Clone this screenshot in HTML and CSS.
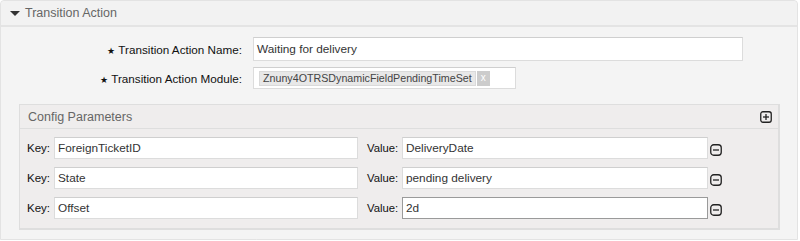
FILE: index.html
```html
<!DOCTYPE html>
<html>
<head>
<meta charset="utf-8">
<link rel="stylesheet" href="styles.css">
</head>
<body>
<div class="widget">
  <div class="widget-head"><span class="tri"></span><span class="head-title">Transition Action</span></div>
  <div class="widget-body">
    <div class="field-row">
      <label class="field-label"><span class="marker">★</span> Transition Action Name:</label>
      <div class="input name-input">Waiting for delivery</div>
    </div>
    <div class="field-row module-row">
      <label class="field-label"><span class="marker">★</span> Transition Action Module:</label>
      <div class="input module-input"><span class="token">Znuny4OTRSDynamicFieldPendingTimeSet</span><span class="token-x">x</span></div>
    </div>
    <div class="inner">
      <div class="inner-head">
        <span class="inner-title">Config Parameters</span>
        <svg class="icon plus" width="12" height="12" viewBox="0 0 12 12"><rect x="0.75" y="0.75" width="10.5" height="10.5" rx="2.2" fill="none" stroke="#222" stroke-width="1.3"/><line x1="3" y1="6" x2="9" y2="6" stroke="#222" stroke-width="1.3"/><line x1="6" y1="3" x2="6" y2="9" stroke="#222" stroke-width="1.3"/></svg>
      </div>
      <div class="inner-body">
        <div class="kv-row">
          <span class="key-label">Key:</span>
          <div class="input key-input">ForeignTicketID</div>
          <span class="value-label">Value:</span>
          <div class="input value-input">DeliveryDate</div>
          <svg class="icon minus" width="12" height="12" viewBox="0 0 12 12"><rect x="0.75" y="0.75" width="10.5" height="10.5" rx="3" fill="none" stroke="#222" stroke-width="1.3"/><line x1="3" y1="6" x2="9" y2="6" stroke="#222" stroke-width="1.3"/></svg>
        </div>
        <div class="kv-row">
          <span class="key-label">Key:</span>
          <div class="input key-input">State</div>
          <span class="value-label">Value:</span>
          <div class="input value-input">pending delivery</div>
          <svg class="icon minus" width="12" height="12" viewBox="0 0 12 12"><rect x="0.75" y="0.75" width="10.5" height="10.5" rx="3" fill="none" stroke="#222" stroke-width="1.3"/><line x1="3" y1="6" x2="9" y2="6" stroke="#222" stroke-width="1.3"/></svg>
        </div>
        <div class="kv-row">
          <span class="key-label">Key:</span>
          <div class="input key-input">Offset</div>
          <span class="value-label">Value:</span>
          <div class="input value-input focused">2d</div>
          <svg class="icon minus" width="12" height="12" viewBox="0 0 12 12"><rect x="0.75" y="0.75" width="10.5" height="10.5" rx="3" fill="none" stroke="#222" stroke-width="1.3"/><line x1="3" y1="6" x2="9" y2="6" stroke="#222" stroke-width="1.3"/></svg>
        </div>
      </div>
    </div>
  </div>
</div>
</body>
</html>
```

FILE: styles.css
```css
* { box-sizing: border-box; }
html, body { margin: 0; padding: 0; background: #ffffff; }
body { font-family: "Liberation Sans", Arial, sans-serif; color: #222; }

.widget {
  width: 798px;
  border: 1px solid #e3e3e3;
  border-radius: 4px 4px 0 0;
  background: #f4f4f4;
}
.widget-head {
  height: 26px;
  background: #f2f2f2;
  border-bottom: 2px solid #e4e4e4;
  display: flex;
  align-items: center;
  padding-left: 9px;
  border-radius: 4px 4px 0 0;
}
.tri {
  width: 0; height: 0;
  border-left: 5px solid transparent;
  border-right: 5px solid transparent;
  border-top: 5px solid #333;
  margin-right: 5px;
  margin-top: 1px;
}
.head-title { font-size: 12.5px; color: #666; }

.widget-body { padding: 10px 17px 9px 18px; }

.field-row { display: flex; align-items: center; height: 24px; }
.module-row { margin-top: 5px; }
.field-label {
  width: 241px;
  margin-right: 11px;
  text-align: right;
  font-size: 11.7px;
  color: #111;
  margin-left: -18px;
}
.marker { font-size: 9px; vertical-align: 0; }

.input {
  background: #fff;
  border: 1px solid #dcdcdc;
  border-top-color: #cfcfcf;
  font-size: 11.8px;
  color: #333;
  display: flex;
  align-items: center;
  padding-left: 3px;
}
.name-input { width: 490px; height: 24px; }
.module-input { width: 263px; height: 22px; padding-left: 5px; }
.token {
  background: #e8e8e8;
  border: 1px solid #dadada;
  font-size: 10.7px;
  color: #444;
  padding: 0 3px;
  height: 15px;
  line-height: 13px;
}
.token-x {
  background: #cccccc;
  color: #fff;
  font-size: 10px;
  width: 13px;
  height: 15px;
  line-height: 14px;
  text-align: center;
  margin-left: 1px;
}

.inner {
  margin-top: 14px;
  border: 1px solid #dedede;
  border-right-width: 2px;
  border-bottom-width: 2px;
  background: #efeded;
}
.inner-head {
  height: 24px;
  border-bottom: 1px solid #dedede;
  display: flex;
  align-items: center;
  justify-content: space-between;
  padding: 0 6px 0 8px;
}
.inner-title { font-size: 12.5px; color: #666; }
.icon { display: block; }
.plus { margin-top: 0; }

.inner-body { padding: 8px 0 9px 7px; display: flex; flex-direction: column; gap: 8px; }
.kv-row { display: flex; align-items: center; height: 22px; }
.key-label { width: 27px; font-size: 11.5px; color: #111; }
.value-label { width: 35px; margin-left: 9px; font-size: 11.3px; color: #111; }
.key-input { width: 304px; height: 22px; }
.value-input { width: 306px; height: 22px; }
.focused { border-color: #9a9a9a; }
.minus { margin-left: 2px; margin-top: 3px; }
```
